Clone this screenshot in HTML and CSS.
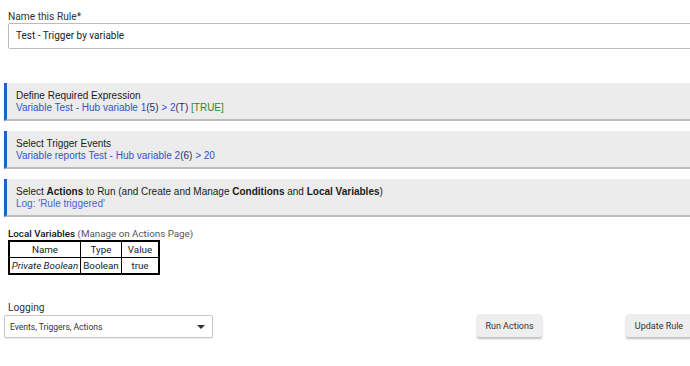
FILE: index.html
```html
<!DOCTYPE html>
<html lang="en">
<head>
  <meta charset="UTF-8" />
  <title>Rule Machine</title>
  <link rel="stylesheet" href="styles.css">
</head>
<body>
  <div class="page">
    <div class="field">
      <label class="field-label">Name this Rule*</label>
      <div class="text-input">Test - Trigger by variable</div>
    </div>

    <div class="sections">
      <div class="section">
        <div class="section-title">Define Required Expression</div>
        <div class="section-desc"><span class="link">Variable Test - Hub variable 1</span><span class="val">(5)</span><span class="link"> &gt; 2</span><span class="val">(T)</span> <span class="ok">[TRUE]</span></div>
      </div>
      <div class="section">
        <div class="section-title">Select Trigger Events</div>
        <div class="section-desc"><span class="link">Variable reports Test - Hub variable 2</span><span class="val">(6)</span><span class="link"> &gt; 20</span></div>
      </div>
      <div class="section">
        <div class="section-title">Select <b>Actions</b> to Run (and Create and Manage <b>Conditions</b> and <b>Local Variables</b>)</div>
        <div class="section-desc"><span class="link log">Log: 'Rule triggered'</span></div>
      </div>
    </div>

    <div class="locals">
      <div class="locals-head"><b>Local Variables</b> (Manage on Actions Page)</div>
      <table class="vars">
        <tr><th class="c-name">Name</th><th class="c-type">Type</th><th class="c-value">Value</th></tr>
        <tr><td class="c-name"><i>Private Boolean</i></td><td class="c-type">Boolean</td><td class="c-value">true</td></tr>
      </table>
    </div>

    <div class="bottom">
      <div class="logging">
        <label class="field-label">Logging</label>
        <div class="select">
          <span>Events, Triggers, Actions</span>
          <span class="caret"></span>
        </div>
      </div>
      <button class="btn btn-run">Run Actions</button>
      <button class="btn btn-update">Update Rule</button>
    </div>
  </div>
</body>
</html>
```

FILE: styles.css
```css
html, body {
  margin: 0;
  overflow: hidden;
  background: #fff;
}
body {
  font-family: Roboto, "Liberation Sans", sans-serif;
  color: #333;
  width: 690px;
  height: 366px;
}
.page {
  width: 720px;
  padding-top: 10px;
}
.field {
  padding-left: 8px;
}
.field-label {
  display: block;
  font-size: 10.2px;
  line-height: 13px;
  color: #333;
}
.text-input {
  height: 24px;
  border: 1px solid #bbb;
  border-radius: 2px;
  font-size: 10px;
  line-height: 24px;
  padding-left: 7px;
  color: #222;
}
.sections {
  margin-top: 34px;
  padding-left: 4px;
  display: flex;
  flex-direction: column;
  gap: 10px;
}
.section {
  background: #ececec;
  border-left: 3px solid #1a61c8;
  border-bottom: 2px solid #bcbcbc;
  padding: 7px 0 5px 9px;
  font-family: "Liberation Sans", Arial, sans-serif;
  font-size: 10px;
  line-height: 12px;
  color: #1a1a1a;
}
.link {
  color: #2f55c7;
}
.log {
  color: #4a62cc;
}
.val {
  color: #1c2f66;
}
.ok {
  color: #2c8a2c;
}
.locals {
  margin-top: 10px;
  padding-left: 8px;
  font-size: 9.8px;
  line-height: 13px;
}
.locals-head {
  color: #555;
}
.locals-head b {
  font-weight: 500;
  color: #111;
}
.vars {
  border-collapse: collapse;
  border: 2px solid #000;
  font-size: 9.8px;
  color: #222;
  table-layout: fixed;
  width: 148px;
}
.vars th, .vars td {
  border: 1px solid #000;
  padding: 1px 0;
  line-height: 13px;
  text-align: center;
  font-weight: 400;
  white-space: nowrap;
  overflow: hidden;
}
.c-name {
  width: 70px;
}
.c-type {
  width: 40px;
}
.c-value {
  width: 36px;
}
.bottom {
  margin-top: 26px;
  display: flex;
  align-items: flex-end;
}
.logging {
  padding-left: 4px;
}
.logging .field-label {
  padding-left: 4px;
  margin-bottom: 1px;
}
.select {
  width: 195px;
  height: 21px;
  border: 1px solid #c8c8c8;
  border-radius: 2px;
  box-shadow: 0 1px 1px rgba(0, 0, 0, 0.08);
  display: flex;
  align-items: center;
  justify-content: space-between;
  padding: 0 7px 0 5px;
  font-size: 8.5px;
  color: #333;
}
.caret {
  width: 0;
  height: 0;
  border-left: 4px solid transparent;
  border-right: 4px solid transparent;
  border-top: 4px solid #333;
}
.btn {
  font-family: Roboto, "Liberation Sans", sans-serif;
  font-size: 9px;
  color: #333;
  background: #eeeeee;
  border: none;
  border-radius: 2px;
  box-shadow: 0 2px 2px rgba(0, 0, 0, 0.25);
  height: 23px;
  padding: 0;
  white-space: nowrap;
  margin-bottom: 1px;
}
.btn-run {
  margin-left: 264px;
  width: 65px;
}
.btn-update {
  margin-left: 84px;
  width: 66px;
}
```
